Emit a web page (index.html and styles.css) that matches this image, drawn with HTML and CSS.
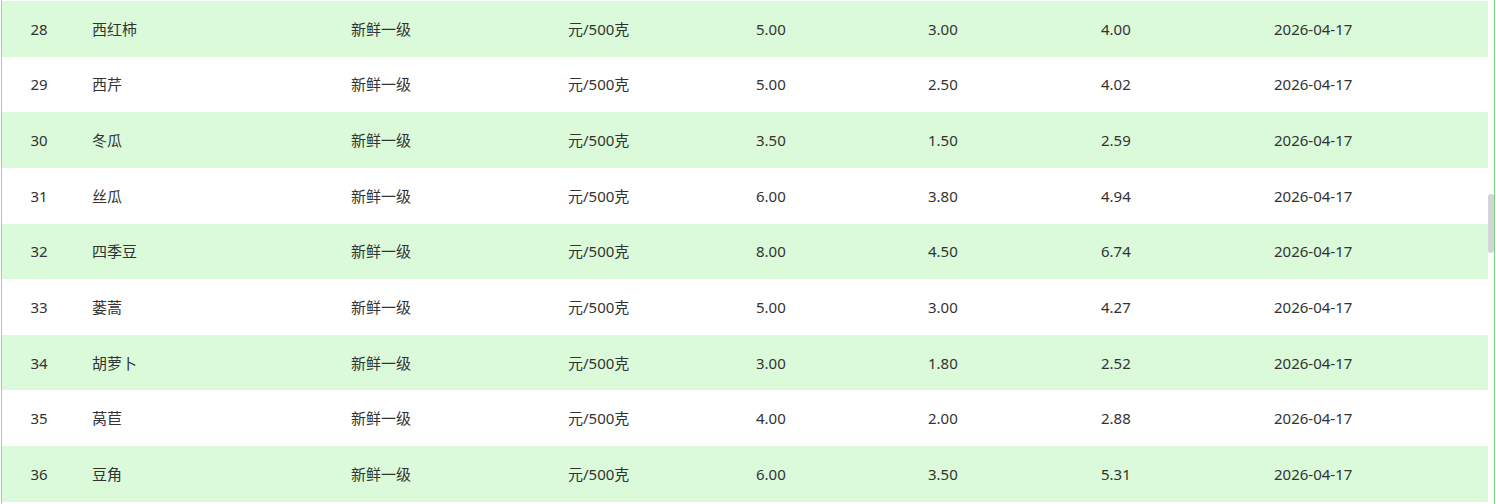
FILE: index.html
```html
<!DOCTYPE html>
<html lang="zh-CN">
<head>
<meta charset="utf-8">
<title>蔬菜价格</title>
<link rel="stylesheet" href="styles.css">
</head>
<body>
<div class="frame">
  <div class="scroller">
    <table class="price-table">
      <colgroup>
        <col class="c-no"><col class="c-name"><col class="c-grade"><col class="c-unit">
        <col class="c-max"><col class="c-min"><col class="c-avg"><col class="c-date">
      </colgroup>
      <tbody>
        <tr class="odd"><td class="no">28</td><td>西红柿</td><td>新鲜一级</td><td>元/500克</td><td>5.00</td><td>3.00</td><td>4.00</td><td>2026-04-17</td></tr>
        <tr><td class="no">29</td><td>西芹</td><td>新鲜一级</td><td>元/500克</td><td>5.00</td><td>2.50</td><td>4.02</td><td>2026-04-17</td></tr>
        <tr class="odd"><td class="no">30</td><td>冬瓜</td><td>新鲜一级</td><td>元/500克</td><td>3.50</td><td>1.50</td><td>2.59</td><td>2026-04-17</td></tr>
        <tr><td class="no">31</td><td>丝瓜</td><td>新鲜一级</td><td>元/500克</td><td>6.00</td><td>3.80</td><td>4.94</td><td>2026-04-17</td></tr>
        <tr class="odd"><td class="no">32</td><td>四季豆</td><td>新鲜一级</td><td>元/500克</td><td>8.00</td><td>4.50</td><td>6.74</td><td>2026-04-17</td></tr>
        <tr><td class="no">33</td><td>蒌蒿</td><td>新鲜一级</td><td>元/500克</td><td>5.00</td><td>3.00</td><td>4.27</td><td>2026-04-17</td></tr>
        <tr class="odd"><td class="no">34</td><td>胡萝卜</td><td>新鲜一级</td><td>元/500克</td><td>3.00</td><td>1.80</td><td>2.52</td><td>2026-04-17</td></tr>
        <tr><td class="no">35</td><td>莴苣</td><td>新鲜一级</td><td>元/500克</td><td>4.00</td><td>2.00</td><td>2.88</td><td>2026-04-17</td></tr>
        <tr class="odd"><td class="no">36</td><td>豆角</td><td>新鲜一级</td><td>元/500克</td><td>6.00</td><td>3.50</td><td>5.31</td><td>2026-04-17</td></tr>
      </tbody>
    </table>
    <div class="track"><div class="thumb"></div></div>
  </div>
</div>
</body>
</html>
```

FILE: styles.css
```css
html, body {
  margin: 0;
  padding: 0;
  background: #ffffff;
}
body {
  font-family: "Noto Sans", "Noto Sans CJK SC", sans-serif;
  font-size: 15px;
  color: #333333;
}
.frame {
  margin-left: 1px;
  width: 1494px;
  box-sizing: border-box;
  height: 504px;
  border-left: 1px solid #9fd59f;
  border-right: 1px solid #7fcf7f;
  overflow: hidden;
  padding-top: 1px;
}
.scroller {
  display: flex;
  align-items: flex-start;
}
.price-table {
  width: 1486px;
  flex: none;
  table-layout: fixed;
  border-collapse: collapse;
  border-spacing: 0;
}
.c-no { width: 74px; }
.c-name { width: 259px; }
.c-grade { width: 217px; }
.c-unit { width: 188px; }
.c-max { width: 172px; }
.c-min { width: 173px; }
.c-avg { width: 173px; }
.c-date { width: 230px; }
.price-table td {
  height: 55.63px;
  padding: 0 0 0 16px;
  box-sizing: border-box;
  white-space: nowrap;
  vertical-align: middle;
  line-height: 20px;
}
.price-table td.no {
  padding: 0;
  text-align: center;
}
.price-table tr.odd td {
  background: #dafad9;
}
.track {
  width: 6px;
  flex: none;
  padding-top: 193px;
}
.thumb {
  width: 6px;
  height: 59px;
  border-radius: 3px;
  background: #d2d6db;
}
```
